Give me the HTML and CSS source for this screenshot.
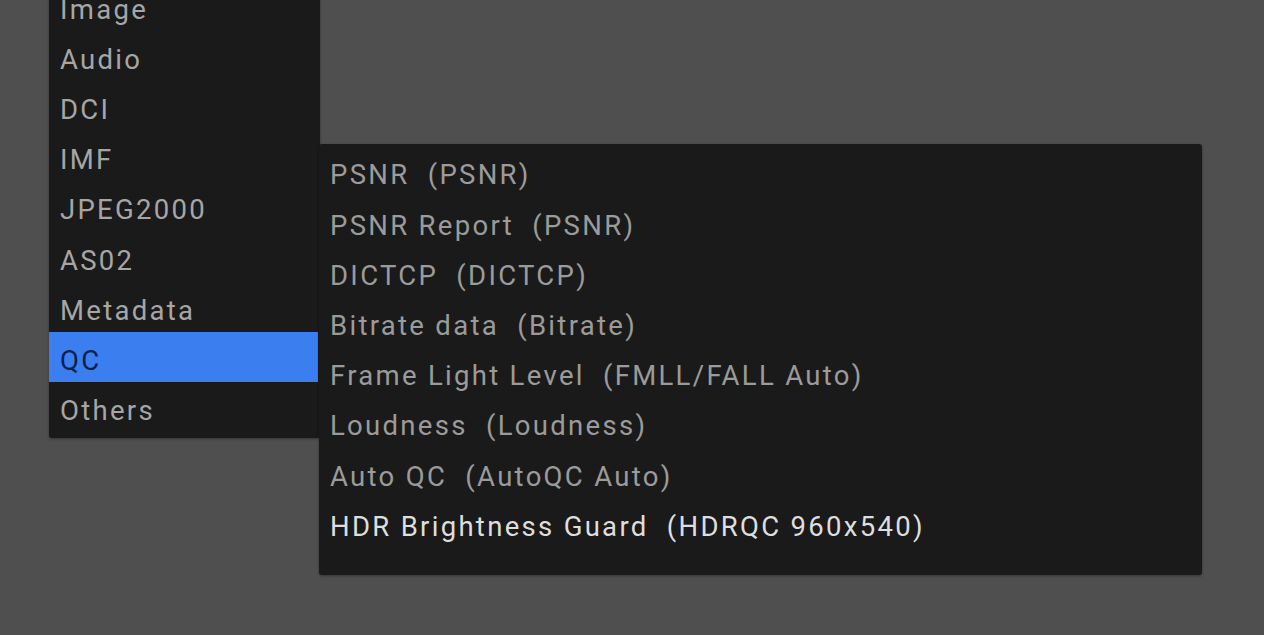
FILE: index.html
```html
<!DOCTYPE html>
<html>
<head>
<meta charset="utf-8">
<link rel="stylesheet" href="styles.css">
</head>
<body>
<div class="stage">
  <ul class="menu main-menu">
    <li class="item">Image</li>
    <li class="item">Audio</li>
    <li class="item">DCI</li>
    <li class="item">IMF</li>
    <li class="item">JPEG2000</li>
    <li class="item">AS02</li>
    <li class="item">Metadata</li>
    <li class="item active">QC</li>
    <li class="item">Others</li>
  </ul>
  <ul class="menu sub-menu">
    <li class="item">PSNR  (PSNR)</li>
    <li class="item">PSNR Report  (PSNR)</li>
    <li class="item">DICTCP  (DICTCP)</li>
    <li class="item">Bitrate data  (Bitrate)</li>
    <li class="item">Frame Light Level  (FMLL/FALL Auto)</li>
    <li class="item">Loudness  (Loudness)</li>
    <li class="item">Auto QC  (AutoQC Auto)</li>
    <li class="item bright">HDR Brightness Guard  (HDRQC 960x540)</li>
  </ul>
</div>
</body>
</html>
```

FILE: styles.css
```css
html, body {
  margin: 0;
  padding: 0;
  background: #4f4f4f;
  width: 1264px;
  height: 635px;
  overflow: hidden;
}

.stage {
  position: relative;
  width: 1264px;
  height: 635px;
  font-family: Roboto, "Noto Sans", sans-serif;
}

.menu {
  list-style: none;
  margin: 0;
  background: #1a1a1a;
  border-radius: 3px;
  box-shadow: 0 1px 3px rgba(0, 0, 0, 0.35);
}

.item {
  height: 50.2px;
  line-height: 57px;
  font-size: 27.5px;
  letter-spacing: 2.3px;
  white-space: pre;
}

.main-menu {
  position: absolute;
  left: 49px;
  top: -25px;
  width: 271px;
  padding: 5.6px 0 5.6px 0;
  color: #a6a6a6;
}

.main-menu .item {
  padding-left: 11px;
  margin-right: 2px;
}

.main-menu .active {
  background: #3b7ef0;
  color: #0b1f4d;
}

.sub-menu {
  position: absolute;
  left: 319px;
  top: 144px;
  width: 883px;
  height: 431px;
  box-sizing: border-box;
  padding: 2.4px 0 0 11px;
  color: #9b9b9b;
}

.sub-menu .bright {
  color: #dedede;
}
```
